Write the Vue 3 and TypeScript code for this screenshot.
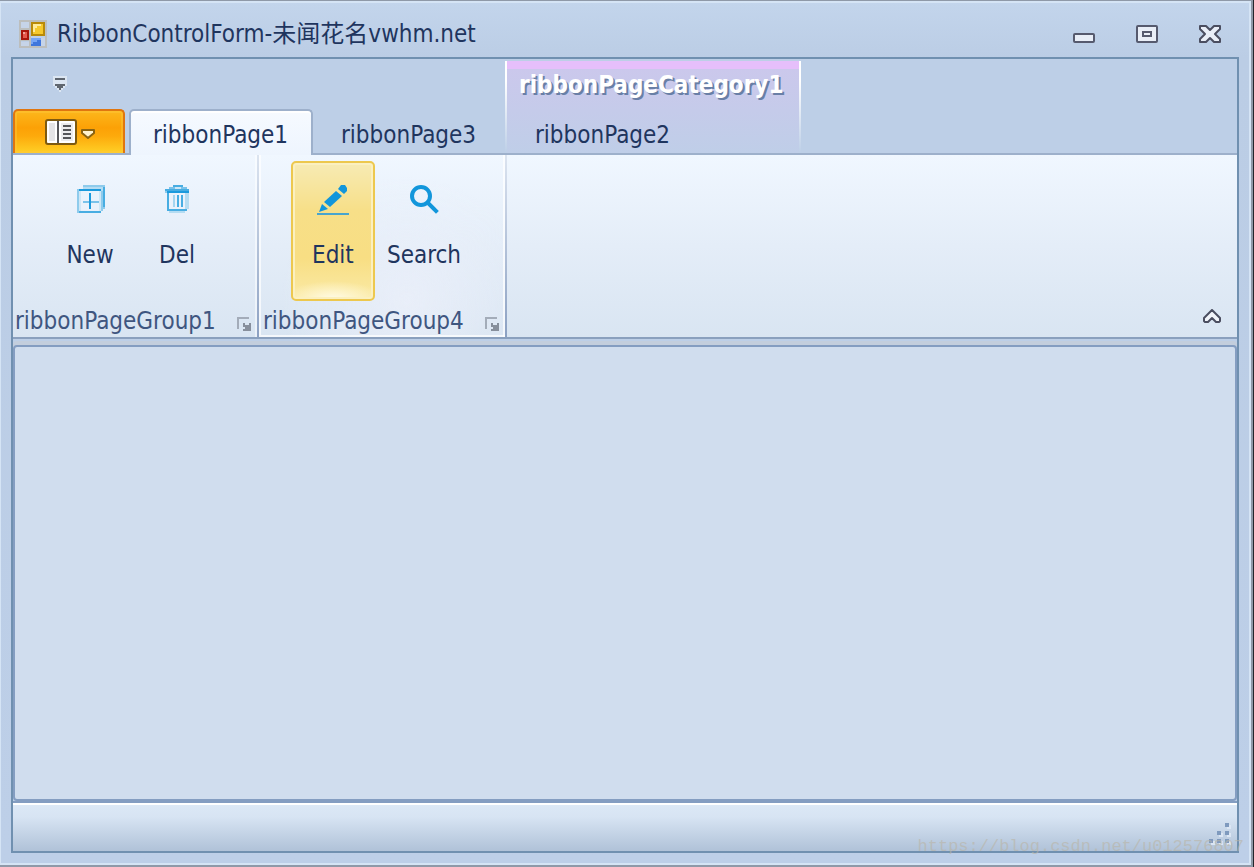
<script setup lang="ts">
import { ref } from 'vue'

interface Tab {
  id: string
  label: string
}

interface RibbonItem {
  id: string
  label: string
}

interface RibbonGroup {
  label: string
  items: RibbonItem[]
}

const activeTab = ref('page1')
const hotItem = ref('edit')

const tabs: Tab[] = [
  { id: 'page1', label: 'ribbonPage1' },
  { id: 'page3', label: 'ribbonPage3' },
]
const categoryTab: Tab = { id: 'page2', label: 'ribbonPage2' }

const groups: RibbonGroup[] = [
  {
    label: 'ribbonPageGroup1',
    items: [
      { id: 'new', label: 'New' },
      { id: 'del', label: 'Del' },
    ],
  },
  {
    label: 'ribbonPageGroup4',
    items: [
      { id: 'edit', label: 'Edit' },
      { id: 'search', label: 'Search' },
    ],
  },
]

const gripDots = [
  [16, 0],
  [8, 8],
  [16, 8],
  [0, 16],
  [8, 16],
  [16, 16],
]
</script>

<template>
  <div class="window">
    <header class="titlebar">
      <svg class="form-icon" width="28" height="28" viewBox="0 0 28 28" shape-rendering="crispEdges">
        <path d="M1 1H27V27H1ZM11 1V27M1 9H11M1 20H27" fill="none" stroke="#bcbebd" stroke-width="2" />
        <rect x="2" y="2" width="8" height="6" fill="#c6d4e8" />
        <rect x="2" y="22" width="8" height="4" fill="#c6d4e8" />
        <rect x="2" y="10" width="8" height="10" fill="#a8160c" />
        <rect x="4" y="12" width="4" height="6" fill="#e45a4e" />
        <rect x="4" y="12" width="2" height="2" fill="#f3a59c" />
        <rect x="12" y="2" width="14" height="14" fill="#b98a08" />
        <rect x="14" y="4" width="10" height="10" fill="#f6c92c" />
        <path d="M14 4H22V6H18V8H16V12H14Z" fill="#ffeb9c" />
        <rect x="12" y="18" width="10" height="8" fill="#3f76dc" />
        <path d="M12 18H22V20H18V22H14V24H12Z" fill="#76a5f4" />
        <rect x="22" y="18" width="4" height="8" fill="#c6d4e8" />
      </svg>
      <h1 class="title">RibbonControlForm-未闻花名vwhm.net</h1>
      <div class="window-buttons">
        <button type="button" aria-label="Minimize">
          <svg width="22" height="18" viewBox="0 0 22 18">
            <rect x="1" y="9" width="20" height="8" rx="1" fill="#e9eef7" stroke="#565a6e" stroke-width="2" />
          </svg>
        </button>
        <button type="button" aria-label="Maximize">
          <svg width="22" height="18" viewBox="0 0 22 18">
            <rect x="1" y="1" width="20" height="16" rx="1" fill="#e9eef7" stroke="#565a6e" stroke-width="2" />
            <rect x="7" y="7" width="8" height="4" fill="#e9eef7" stroke="#565a6e" stroke-width="2" />
          </svg>
        </button>
        <button type="button" aria-label="Close">
          <svg width="22" height="18" viewBox="0 0 22 18">
            <path
              d="M1 1H7L11 5L15 1H21V4L16 9L21 14V17H15L11 13L7 17H1V14L6 9L1 4Z"
              fill="#e9eef7" stroke="#4b4e60" stroke-width="2" stroke-linejoin="round"
            />
          </svg>
        </button>
      </div>
    </header>

    <div class="frame">
      <div class="ribbon-header">
        <div class="header-main">
          <div class="quick-access">
            <button type="button" aria-label="Customize Quick Access Toolbar">
              <svg width="14" height="16" viewBox="0 0 14 16" shape-rendering="crispEdges">
                <path d="M0 0H14V10H12V12H10V14H8V16H6V14H4V12H2V10H0Z" fill="#dce6f2" />
                <rect x="2" y="2" width="10" height="2" fill="#5f666f" />
                <path d="M2 8H12V10H10V12H8V14H6V12H4V10H2Z" fill="#5f666f" />
              </svg>
            </button>
          </div>
          <nav class="tabs">
            <button type="button" class="app-button" aria-label="Application menu">
              <svg width="50" height="26" viewBox="0 0 50 26">
                <rect x="1" y="1" width="30" height="24" rx="2" fill="#fff" stroke="#7d5a10" stroke-width="2" />
                <rect x="4" y="4" width="6" height="18" fill="#e4e4e6" />
                <rect x="16" y="4" width="12" height="18" fill="#ececee" />
                <path d="M13 2V24M18 7H26M18 11H26M18 15H26M18 19H26" stroke="#55565a" stroke-width="2" fill="none" />
                <path d="M37 11H49V14L43 19L37 14Z" fill="#fff3cf" stroke="#8a6412" stroke-width="2" stroke-linejoin="round" />
              </svg>
            </button>
            <button
              v-for="tab in tabs"
              :key="tab.id"
              type="button"
              class="tab"
              :class="{ active: activeTab === tab.id }"
              @click="activeTab = tab.id"
            >{{ tab.label }}</button>
          </nav>
        </div>
        <div class="category">
          <div class="category-caption">ribbonPageCategory1</div>
          <button
            type="button"
            class="tab"
            :class="{ active: activeTab === categoryTab.id }"
            @click="activeTab = categoryTab.id"
          >{{ categoryTab.label }}</button>
        </div>
      </div>

      <div class="ribbon-body">
        <section v-for="group in groups" :key="group.label" class="group">
          <div class="group-items">
            <button
              v-for="item in group.items"
              :key="item.id"
              type="button"
              class="item"
              :class="{ hot: hotItem === item.id }"
              @mouseenter="hotItem = item.id"
            >
              <svg v-if="item.id === 'new'" width="32" height="32" viewBox="0 0 32 32" shape-rendering="crispEdges">
                <path d="M9 2H31V26H29V4H9Z" fill="#8ecbec" />
                <path d="M29 4H31V24H29Z" fill="#48ade2" />
                <path d="M9 4H29V6H9Z" fill="#b5dcf2" />
                <path d="M27 6H29V26H27Z" fill="#b5dcf2" />
                <rect x="3" y="6" width="2" height="24" fill="#8ecbec" />
                <rect x="5" y="6" width="22" height="2" fill="#1c9add" />
                <rect x="5" y="28" width="22" height="2" fill="#48ade2" />
                <path d="M5 8H7V28H5ZM25 8H27V28H25Z" fill="#cfe7f6" />
                <path d="M27 8H29V28H27Z" fill="#8ecbec" />
                <path d="M9 18H25V20H9Z" fill="#7ac2ea" />
                <path d="M15 10H17V26H15Z" fill="#1c9add" />
              </svg>
              <svg v-else-if="item.id === 'del'" width="32" height="32" viewBox="0 0 32 32" shape-rendering="crispEdges">
                <path d="M12 2H22V4H26V6H8V4H12Z" fill="#79c2ea" />
                <path d="M12 2H22V4H12Z" fill="#48ade2" />
                <path d="M14 4H20V6H14Z" fill="#cfe7f6" />
                <path d="M4 6H28V10H4Z" fill="#8ecbec" />
                <path d="M4 6H28V8H4Z" fill="#48ade2" />
                <path d="M6 8H28V10H6Z" fill="#1c9add" />
                <rect x="6" y="10" width="2" height="18" fill="#48ade2" />
                <path d="M8 26H26V28H8Z" fill="#48ade2" />
                <path d="M8 28H24V30H8ZM24 10H28V26H24Z" fill="#b5dcf2" />
                <path d="M12 12H14V24H12Z" fill="#a4d5f0" />
                <path d="M16 12H18V24H16ZM20 12H22V24H20Z" fill="#48ade2" />
              </svg>
              <svg v-else-if="item.id === 'edit'" width="32" height="32" viewBox="0 0 32 32">
                <path d="M7 19L19 8L25 13L13 24Z" fill="#1296db" />
                <path d="M21 6L24 2H28L30 5V8L27 11Z" fill="#1296db" />
                <path d="M5 21L11 26L2 29Z" fill="#1296db" />
                <path d="M0 31H32" stroke="#48a5cf" stroke-width="2" />
              </svg>
              <svg v-else width="32" height="32" viewBox="0 0 32 32">
                <circle cx="13" cy="13" r="9" fill="none" stroke="#1296db" stroke-width="4" />
                <path d="M20 20L28 28" stroke="#1296db" stroke-width="4" stroke-linecap="square" />
              </svg>
              <span>{{ item.label }}</span>
            </button>
          </div>
          <div class="group-caption">
            <span>{{ group.label }}</span>
            <button type="button" :aria-label="group.label + ' options'">
              <svg width="14" height="14" viewBox="0 0 14 14" shape-rendering="crispEdges">
                <path d="M0 0H12V2H2V12H0Z" fill="#a3acb9" />
                <path d="M6 6H8V8H10V10H10V8H12V6H14V14H6V12H8V10H6Z" fill="#878f9c" />
              </svg>
            </button>
          </div>
        </section>
        <button type="button" class="collapse" aria-label="Collapse the ribbon">
          <svg width="18" height="14" viewBox="0 0 18 14">
            <path
              d="M9 1L17 9V12L16 13H13L9 9L5 13H2L1 12V9Z"
              fill="#f2f5fa" stroke="#4b4e60" stroke-width="2" stroke-linejoin="round"
            />
          </svg>
        </button>
      </div>

      <main class="client"></main>

      <footer class="statusbar">
        <svg width="22" height="22" viewBox="0 0 22 22" shape-rendering="crispEdges">
          <g v-for="[x, y] in gripDots" :key="`${x}-${y}`">
            <rect :x="x + 2" :y="y + 2" width="4" height="4" fill="#dbe6f4" />
            <rect :x="x" :y="y" width="4" height="4" fill="#7f9abe" />
          </g>
        </svg>
      </footer>
    </div>
    <div class="watermark">https://blog.csdn.net/u012576807</div>
  </div>
</template>

<style>
body {
  margin: 0;
  background: #24262c;
}
</style>

<style scoped>
.window,
.window * {
  box-sizing: border-box;
}

.window {
  position: relative;
  display: flex;
  flex-direction: column;
  min-height: 100vh;
  margin-right: 1px;
  border: solid #8f99a8;
  border-width: 1px 2px 2px 0;
  background: linear-gradient(#c3d5ec, #bbcde5 56px, #bdcfe8);
  box-shadow: inset 1px 2px #d5e4f5, inset -2px -2px #d5e4f5;
  color: #1f355e;
  font: 24px/28px "DejaVu Sans Condensed", "Noto Sans CJK SC", sans-serif;
}

button {
  margin: 0;
  padding: 0;
  border: 0;
  background: none;
  color: inherit;
  font: inherit;
  cursor: pointer;
}

svg {
  display: block;
}

.titlebar {
  display: flex;
  align-items: center;
  height: 56px;
  padding: 10px 30px 0 19px;
}

.title {
  flex: 1;
  margin: 0 0 0 10px;
  font-size: 24px;
  font-weight: 400;
  white-space: nowrap;
}

.window-buttons {
  display: flex;
  gap: 41px;
}

.frame {
  display: flex;
  flex: 1;
  flex-direction: column;
  margin: 0 12px 12px 11px;
  border: 2px solid #7090b0;
  background: #bdcfe7;
}

.ribbon-header {
  display: flex;
  height: 96px;
  border-bottom: 2px solid #9db0cb;
}

.header-main {
  display: flex;
  flex-direction: column;
}

.quick-access {
  display: flex;
  flex: 1;
  align-items: center;
  padding-left: 40px;
}

.tabs {
  display: flex;
  height: 44px;
}

.app-button {
  display: flex;
  justify-content: center;
  width: 112px;
  margin-right: 4px;
  padding: 8px 0 0 2px;
  border: 2px solid #e0760f;
  border-bottom: 0;
  border-radius: 5px 5px 0 0;
  background: linear-gradient(#fcb71c, #fca106 40%, #fdaa0c 60%, #ffd026);
  box-shadow: inset 0 0 0 2px rgba(255, 200, 60, 0.45);
}

.tab {
  min-width: 192px;
  height: 44px;
  padding: 7px 28px 0;
  text-align: left;
  white-space: nowrap;
}

.tabs .tab.active {
  min-width: 184px;
  height: 46px;
  margin-bottom: -2px;
  padding: 3px 22px 0;
  border: 2px solid #9db0cb;
  border-bottom: 0;
  border-radius: 5px 5px 0 0;
  background: linear-gradient(#f6faff, #eef5fe);
  box-shadow: inset 0 2px #fff;
}

.category {
  display: flex;
  flex-direction: column;
  min-width: 296px;
  margin-top: 2px;
  border: solid transparent;
  border-width: 0 2px;
  background:
    linear-gradient(#e6bffb 8px, #cbc8ec 8px, #bfcee8) padding-box,
    linear-gradient(#fff 20px, #bdcfe7) border-box;
}

.category-caption {
  flex: 1;
  padding: 10px 12px 0;
  color: #fff;
  font-weight: 700;
  text-shadow: 2px 2px #697fa6;
}

.ribbon-body {
  display: flex;
  height: 184px;
  border-bottom: 2px solid #8aa0be;
  background: linear-gradient(#f0f7ff, #e4edf8 50%, #d9e5f2);
}

.group {
  display: flex;
  flex-direction: column;
  min-width: 246px;
  border-right: 2px solid;
  border-image: linear-gradient(#dce4f0, #8ba0c2) 1;
  box-shadow: inset -2px 0 rgba(255, 255, 255, 0.5);
}

.group + .group {
  min-width: 248px;
  box-shadow: inset 2px -2px rgba(255, 255, 255, 0.7), inset -2px 0 rgba(255, 255, 255, 0.7);
  background: radial-gradient(ellipse at 60% 80%, rgba(236, 240, 250, 0.8), transparent 60%);
}

.group-items {
  display: flex;
  justify-content: center;
  gap: 3px;
  padding: 6px 3px 0 0;
}

.item {
  display: flex;
  flex-direction: column;
  align-items: center;
  gap: 26px;
  min-width: 84px;
  height: 140px;
  padding: 20px 7px 0;
  border: 2px solid transparent;
  border-radius: 5px;
}

.item.hot {
  border-color: #edc84e;
  background:
    radial-gradient(50px 18px at 50% 100%, #fffbe6, rgba(255, 248, 215, 0.6) 50%, transparent),
    linear-gradient(#f7ebb4, #f7df88 35%, #f8de83 70%, #faeaa6);
  box-shadow: inset 0 0 0 2px #fbf0c0;
}

.group-caption {
  display: flex;
  flex: 1;
  align-items: center;
  justify-content: space-between;
  padding: 4px 6px 0 2px;
  color: #3f5680;
}

.group + .group .group-caption {
  padding-left: 4px;
}

.group-caption button {
  margin-top: 5px;
}

.collapse {
  align-self: flex-end;
  margin: 0 16px 14px auto;
}

.client {
  flex: 1;
  margin-top: 6px;
  border: 2px solid #849dc1;
  border-radius: 4px;
  background: #d0ddee;
  box-shadow: 0 -4px #c3cedd;
}

.statusbar {
  display: flex;
  align-items: flex-end;
  justify-content: flex-end;
  height: 50px;
  padding: 0 6px 6px 0;
  border-top: 2px solid #849dc1;
  background: linear-gradient(#fff 2px, #dce8f6 2px, #d7e4f3 14px, #b0c2d8);
}

.watermark {
  position: absolute;
  right: 7px;
  bottom: 8px;
  color: rgba(185, 180, 165, 0.6);
  font: 17px/20px "Liberation Mono", monospace;
  pointer-events: none;
}
</style>
